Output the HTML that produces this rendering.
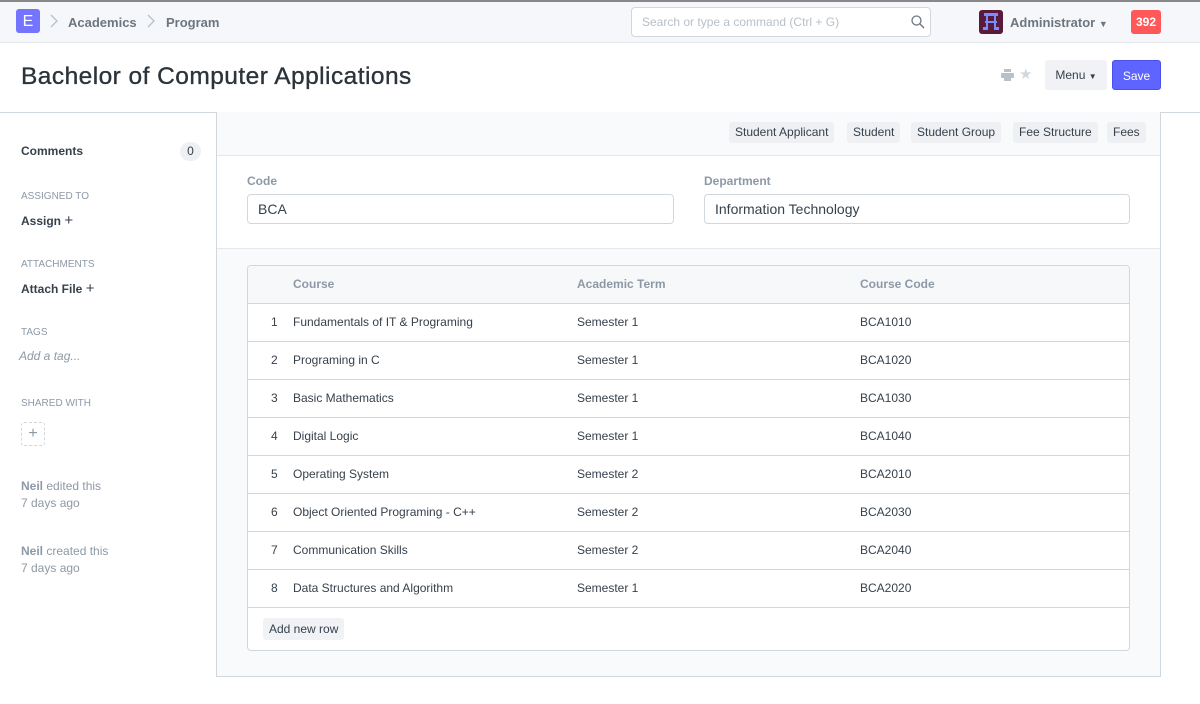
<!DOCTYPE html>
<html><head><style>
*{box-sizing:border-box;margin:0;padding:0}
body{width:1200px;height:704px;overflow:hidden;background:#fff;font-family:"Liberation Sans",sans-serif;color:#36414c;position:relative}
.abs{position:absolute}
.nav{left:0;top:0;width:1200px;height:43px;background:#f5f7fa;border-top:2px solid #888;border-bottom:1px solid #e4e8ec}
.logo{left:16px;top:9px;width:24px;height:24px;background:#7574ff;border-radius:3px;color:#fff;font-size:16px;text-align:center;line-height:25px}
.bc{font-size:13px;font-weight:bold;color:#6c7680}
.search{left:631px;top:7px;width:300px;height:30px;border:1px solid #d1d8dd;border-radius:4px;background:#fff;font-size:12px;color:#b8c0c8;padding:7px 10px}
.badge{left:1131px;top:10px;width:30px;height:24px;background:#ff5858;border-radius:3px;color:#fff;font-size:12px;font-weight:bold;text-align:center;line-height:24px}
h1{position:absolute;left:21px;top:63px;font-size:24.5px;letter-spacing:0.45px;font-weight:normal;color:#2b333b;-webkit-text-stroke:0.35px #2b333b}
.btn{height:30px;border-radius:3px;font-size:12px;line-height:30px;text-align:center}
.sep{left:0;top:112px;width:1200px;height:1px;background:#d1d8dd}
.side{font-size:12px}
.lbl{font-size:10px;color:#8d99a6;text-transform:uppercase}
.main{left:216px;top:112px;width:945px;height:565px;border:1px solid #d1d8dd;border-top:none;background:#f9fafb}
.tag{top:122px;height:21px;background:#eef0f3;border-radius:3px;font-size:12px;line-height:21px;padding:0 6px;color:#36414c}
.inp{height:30px;border:1px solid #d1d8dd;border-radius:4px;background:#fff;font-size:14px;padding:6px 10px;color:#36414c}
.grid{left:247px;top:265px;width:883px;height:386px;border:1px solid #d1d8dd;border-radius:4px;background:#fff;overflow:hidden}
.row{position:absolute;left:0;width:881px;height:38px;border-bottom:1px solid #d1d8dd;font-size:12px;line-height:37px}
.row span{position:absolute}
</style></head><body>
<div class="abs nav"></div>
<div class="abs logo">E</div>
<svg class="abs" style="left:49px;top:14px" width="10" height="14" viewBox="0 0 10 14"><polyline points="2,1 8,7 2,13" fill="none" stroke="#b8c0c8" stroke-width="1.3"/></svg>
<div class="abs bc" style="left:68px;top:15px">Academics</div>
<svg class="abs" style="left:146px;top:14px" width="10" height="14" viewBox="0 0 10 14"><polyline points="2,1 8,7 2,13" fill="none" stroke="#b8c0c8" stroke-width="1.3"/></svg>
<div class="abs bc" style="left:166px;top:15px">Program</div>
<div class="abs search">Search or type a command (Ctrl + G)</div>
<svg class="abs" style="left:911px;top:15px" width="14" height="14" viewBox="0 0 14 14"><circle cx="5.5" cy="5.5" r="4.5" fill="none" stroke="#6c7680" stroke-width="1.3"/><line x1="9" y1="9" x2="13" y2="13" stroke="#6c7680" stroke-width="1.3"/></svg>
<div class="abs" style="left:979px;top:10px;width:24px;height:24px;background:#5a1a3a;border-radius:3px"></div>
<svg class="abs" style="left:981px;top:12px" width="20" height="20" viewBox="0 0 20 20" fill="#7a8cff"><rect x="3" y="1" width="14" height="3"/><rect x="5" y="4" width="2" height="14"/><rect x="13" y="4" width="2" height="14"/><rect x="4" y="9" width="12" height="2"/><rect x="2" y="15" width="5" height="3"/><rect x="13" y="15" width="5" height="3"/></svg>
<div class="abs bc" style="left:1010px;top:15px;color:#6c7680">Administrator <span style="font-size:9px">&#9660;</span></div>
<div class="abs badge">392</div>
<h1>Bachelor of Computer Applications</h1>
<svg class="abs" style="left:1001px;top:69px" width="13" height="12" viewBox="0 0 13 12" fill="#b8c0c8"><rect x="3" y="0" width="7" height="3"/><rect x="0" y="4" width="13" height="5" rx="1"/><rect x="3" y="8" width="7" height="4"/></svg>
<div class="abs" style="left:1019px;top:65px;color:#d1d8dd;font-size:15px">&#9733;</div>
<div class="abs btn" style="left:1045px;top:60px;width:62px;background:#f0f2f5;color:#36414c">Menu <span style="font-size:8px">&#9660;</span></div>
<div class="abs btn" style="left:1112px;top:60px;width:49px;background:#5e64ff;color:#fff;border:1px solid #4a50e8">Save</div>
<div class="abs sep"></div>

<div class="abs side" style="left:21px;top:144px;font-weight:bold">Comments</div>
<div class="abs" style="left:180px;top:142px;width:21px;height:19px;background:#eef0f3;border-radius:10px;font-size:12px;text-align:center;line-height:19px">0</div>
<div class="abs lbl" style="left:21px;top:191px">Assigned To</div>
<div class="abs side" style="left:21px;top:212px;font-weight:bold">Assign <span style="font-weight:normal;font-size:15px">+</span></div>
<div class="abs lbl" style="left:21px;top:259px">Attachments</div>
<div class="abs side" style="left:21px;top:280px;font-weight:bold">Attach File <span style="font-weight:normal;font-size:15px">+</span></div>
<div class="abs lbl" style="left:21px;top:327px">Tags</div>
<div class="abs side" style="left:19px;top:349px;font-style:italic;color:#8d99a6">Add a tag...</div>
<div class="abs lbl" style="left:21px;top:398px">Shared With</div>
<div class="abs" style="left:21px;top:422px;width:24px;height:24px;border:1px dashed #d1d8dd;border-radius:3px;color:#8d99a6;text-align:center;line-height:22px;font-size:16px">+</div>
<div class="abs side" style="left:21px;top:478px;color:#8d99a6;line-height:17px"><b>Neil</b> edited this<br>7 days ago</div>
<div class="abs side" style="left:21px;top:543px;color:#8d99a6;line-height:17px"><b>Neil</b> created this<br>7 days ago</div>

<div class="abs main"></div>
<div class="abs" style="left:217px;top:155px;width:943px;height:94px;background:#fff;border-top:1px solid #e4e8ec;border-bottom:1px solid #e4e8ec"></div>
<div class="abs tag" style="left:729px">Student Applicant</div>
<div class="abs tag" style="left:847px">Student</div>
<div class="abs tag" style="left:911px">Student Group</div>
<div class="abs tag" style="left:1013px">Fee Structure</div>
<div class="abs tag" style="left:1107px">Fees</div>
<div class="abs" style="left:247px;top:174px;font-size:12px;font-weight:bold;color:#8d99a6">Code</div>
<div class="abs inp" style="left:247px;top:194px;width:427px">BCA</div>
<div class="abs" style="left:704px;top:174px;font-size:12px;font-weight:bold;color:#8d99a6">Department</div>
<div class="abs inp" style="left:704px;top:194px;width:426px">Information Technology</div>

<div class="abs grid">
<div class="row" style="top:0;background:#f7f8fa;font-weight:bold;color:#8d99a6"><span style="left:45px">Course</span><span style="left:329px">Academic Term</span><span style="left:612px">Course Code</span></div>
<div class="row" style="top:38px"><span style="left:23px">1</span><span style="left:45px">Fundamentals of IT &amp; Programing</span><span style="left:329px">Semester 1</span><span style="left:612px">BCA1010</span></div>
<div class="row" style="top:76px"><span style="left:23px">2</span><span style="left:45px">Programing in C</span><span style="left:329px">Semester 1</span><span style="left:612px">BCA1020</span></div>
<div class="row" style="top:114px"><span style="left:23px">3</span><span style="left:45px">Basic Mathematics</span><span style="left:329px">Semester 1</span><span style="left:612px">BCA1030</span></div>
<div class="row" style="top:152px"><span style="left:23px">4</span><span style="left:45px">Digital Logic</span><span style="left:329px">Semester 1</span><span style="left:612px">BCA1040</span></div>
<div class="row" style="top:190px"><span style="left:23px">5</span><span style="left:45px">Operating System</span><span style="left:329px">Semester 2</span><span style="left:612px">BCA2010</span></div>
<div class="row" style="top:228px"><span style="left:23px">6</span><span style="left:45px">Object Oriented Programing - C++</span><span style="left:329px">Semester 2</span><span style="left:612px">BCA2030</span></div>
<div class="row" style="top:266px"><span style="left:23px">7</span><span style="left:45px">Communication Skills</span><span style="left:329px">Semester 2</span><span style="left:612px">BCA2040</span></div>
<div class="row" style="top:304px"><span style="left:23px">8</span><span style="left:45px">Data Structures and Algorithm</span><span style="left:329px">Semester 1</span><span style="left:612px">BCA2020</span></div>
<div class="abs" style="left:15px;top:352px;height:22px;padding:0 6px;background:#f0f2f5;border-radius:3px;font-size:12px;line-height:22px">Add new row</div>
</div>
</body></html>
